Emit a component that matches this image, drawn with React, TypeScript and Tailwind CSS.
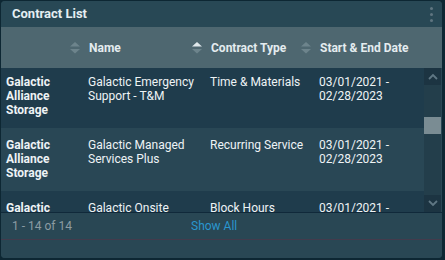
import React from 'react';

interface Contract {
  company: string[];
  name: string[];
  type: string;
  dates: string[];
}

const contracts: Contract[] = [
  {
    company: ['Galactic', 'Alliance', 'Storage'],
    name: ['Galactic Emergency', 'Support - T&M'],
    type: 'Time & Materials',
    dates: ['03/01/2021 -', '02/28/2023'],
  },
  {
    company: ['Galactic', 'Alliance', 'Storage'],
    name: ['Galactic Managed', 'Services Plus'],
    type: 'Recurring Service',
    dates: ['03/01/2021 -', '02/28/2023'],
  },
  {
    company: ['Galactic', 'Alliance', 'Storage'],
    name: ['Galactic Onsite', 'Support'],
    type: 'Block Hours',
    dates: ['03/01/2021 -', '02/28/2023'],
  },
];

function SortIcon({ active }: { active?: boolean }) {
  return (
    <svg width="10" height="12" viewBox="0 0 10 12" className="flex-shrink-0">
      <path d="M5 0 L10 4.5 L0 4.5 Z" fill={active ? '#dfe8eb' : '#6d848c'} />
      <path d="M0 7 L10 7 L5 11.5 Z" fill="#6d848c" />
    </svg>
  );
}

function Chevron({ up }: { up?: boolean }) {
  return (
    <svg width="10" height="7" viewBox="0 0 10 7">
      <path
        d={up ? 'M1 6 L5 2 L9 6' : 'M1 1 L5 5 L9 1'}
        stroke="#5f7784"
        strokeWidth="1.8"
        fill="none"
      />
    </svg>
  );
}

function HeaderCell({ label, width, active }: { label: string; width: string; active?: boolean }) {
  return (
    <div className={`${width} flex-shrink-0`}>
      <div className="-ml-[18px] flex items-center gap-[9px]">
        <SortIcon active={active} />
        <span>{label}</span>
      </div>
    </div>
  );
}

export default function App() {
  return (
    <div
      className="w-[445px] h-[260px] bg-[#0d2733] pt-[1px] pl-[1px]"
      style={{ fontFamily: 'Roboto, "Liberation Sans", sans-serif' }}
    >
      <div className="w-[441px] h-[257px] rounded-[4px] overflow-hidden bg-[#294754] flex flex-col">
        {/* Title bar */}
        <div className="h-[26px] flex-shrink-0 flex items-center justify-between bg-[#284855] pl-[11px] pr-[9px]">
          <span className="text-[13px] font-bold text-[#e4eef2]">Contract List</span>
          <div className="flex flex-col gap-[3px]">
            <span className="w-[3px] h-[3px] rounded-full bg-[#5f7580]" />
            <span className="w-[3px] h-[3px] rounded-full bg-[#5f7580]" />
            <span className="w-[3px] h-[3px] rounded-full bg-[#5f7580]" />
          </div>
        </div>

        {/* Column headers */}
        <div className="h-[41px] flex-shrink-0 flex items-center bg-[#4e6770] text-[12px] font-bold text-[#e4ecef]">
          <div className="w-[87px] flex-shrink-0" />
          <HeaderCell label="Name" width="w-[122px]" />
          <HeaderCell label="Contract Type" width="w-[109px]" active />
          <HeaderCell label="Start & End Date" width="w-[105px]" />
        </div>

        {/* Body */}
        <div className="h-[145px] flex-shrink-0 flex border-b border-[#10293a] overflow-hidden">
          <div className="w-[423px] overflow-hidden">
            <div className="-mt-[3px]">
              {contracts.map((c, i) => (
                <div
                  key={i}
                  className={`h-[63px] flex pt-[10px] text-[12px] leading-[14px] text-[#eef3f5] ${
                    i % 2 === 0 ? 'bg-[#1f3c4c]' : 'bg-[#294755]'
                  }`}
                >
                  <div className="w-[87px] pl-[5px] font-bold">
                    {c.company.map(l => (
                      <div key={l}>{l}</div>
                    ))}
                  </div>
                  <div className="w-[122px]">
                    {c.name.map(l => (
                      <div key={l}>{l}</div>
                    ))}
                  </div>
                  <div className="w-[109px]">{c.type}</div>
                  <div className="flex-1">
                    {c.dates.map(l => (
                      <div key={l}>{l}</div>
                    ))}
                  </div>
                </div>
              ))}
            </div>
          </div>

          {/* Scrollbar */}
          <div className="w-[17px] flex flex-col bg-[#233e4b]">
            <div className="h-[17px] flex items-center justify-center bg-[#1c3442]">
              <Chevron up />
            </div>
            <div className="flex-1 pt-[32px]">
              <div className="h-[17px] bg-[#7a8c93]" />
            </div>
            <div className="h-[17px] flex items-center justify-center bg-[#1c3442]">
              <Chevron />
            </div>
          </div>
        </div>

        {/* Footer */}
        <div className="flex-1 flex flex-col bg-[#294754]">
          <div className="h-[27px] flex items-center pl-[11px] text-[12px] border-b border-[#433b4c]">
            <span className="w-[179px] text-[#8c9ca3]">1 - 14 of 14</span>
            <span className="text-[#2a96cf]">Show All</span>
          </div>
        </div>
      </div>
    </div>
  );
}
